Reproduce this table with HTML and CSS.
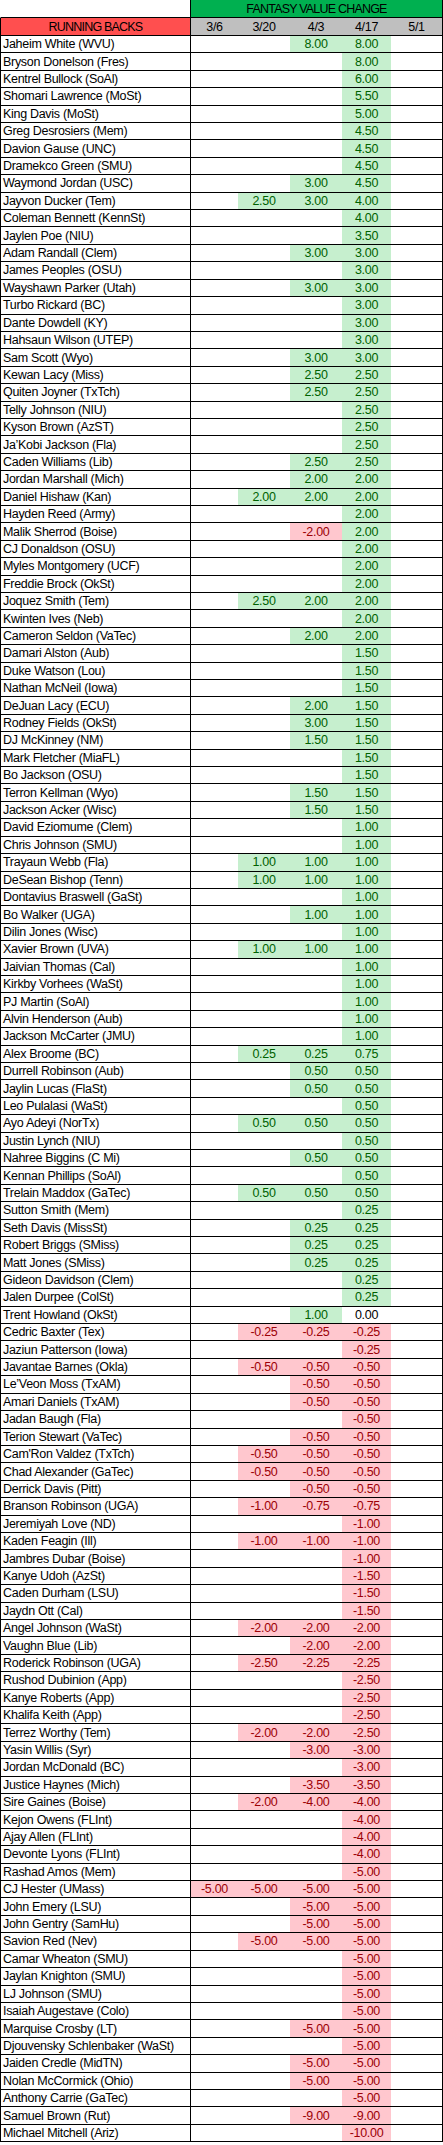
FILE: index.html
```html
<!DOCTYPE html>
<html lang="en">
<head>
<meta charset="utf-8">
<title>Running Backs - Fantasy Value Change</title>
<link rel="stylesheet" href="styles.css">
</head>
<body>
<div class="sheet">
<div class="row top"><span class="blank"></span><span class="title">FANTASY VALUE CHANGE</span></div>
<div class="row head"><span class="nm pos-h">RUNNING BACKS</span><span class="dt">3/6</span><span class="dt">3/20</span><span class="dt">4/3</span><span class="dt">4/17</span><span class="dt">5/1</span></div>
<div class="row"><span class="nm">Jaheim White (WVU)</span><span></span><span></span><span class="g">8.00</span><span class="g">8.00</span><span></span></div>
<div class="row"><span class="nm">Bryson Donelson (Fres)</span><span></span><span></span><span></span><span class="g">8.00</span><span></span></div>
<div class="row"><span class="nm">Kentrel Bullock (SoAl)</span><span></span><span></span><span></span><span class="g">6.00</span><span></span></div>
<div class="row"><span class="nm">Shomari Lawrence (MoSt)</span><span></span><span></span><span></span><span class="g">5.50</span><span></span></div>
<div class="row"><span class="nm">King Davis (MoSt)</span><span></span><span></span><span></span><span class="g">5.00</span><span></span></div>
<div class="row"><span class="nm">Greg Desrosiers (Mem)</span><span></span><span></span><span></span><span class="g">4.50</span><span></span></div>
<div class="row"><span class="nm">Davion Gause (UNC)</span><span></span><span></span><span></span><span class="g">4.50</span><span></span></div>
<div class="row"><span class="nm">Dramekco Green (SMU)</span><span></span><span></span><span></span><span class="g">4.50</span><span></span></div>
<div class="row"><span class="nm">Waymond Jordan (USC)</span><span></span><span></span><span class="g">3.00</span><span class="g">4.50</span><span></span></div>
<div class="row"><span class="nm">Jayvon Ducker (Tem)</span><span></span><span class="g">2.50</span><span class="g">3.00</span><span class="g">4.00</span><span></span></div>
<div class="row"><span class="nm">Coleman Bennett (KennSt)</span><span></span><span></span><span></span><span class="g">4.00</span><span></span></div>
<div class="row"><span class="nm">Jaylen Poe (NIU)</span><span></span><span></span><span></span><span class="g">3.50</span><span></span></div>
<div class="row"><span class="nm">Adam Randall (Clem)</span><span></span><span></span><span class="g">3.00</span><span class="g">3.00</span><span></span></div>
<div class="row"><span class="nm">James Peoples (OSU)</span><span></span><span></span><span></span><span class="g">3.00</span><span></span></div>
<div class="row"><span class="nm">Wayshawn Parker (Utah)</span><span></span><span></span><span class="g">3.00</span><span class="g">3.00</span><span></span></div>
<div class="row"><span class="nm">Turbo Rickard (BC)</span><span></span><span></span><span></span><span class="g">3.00</span><span></span></div>
<div class="row"><span class="nm">Dante Dowdell (KY)</span><span></span><span></span><span></span><span class="g">3.00</span><span></span></div>
<div class="row"><span class="nm">Hahsaun Wilson (UTEP)</span><span></span><span></span><span></span><span class="g">3.00</span><span></span></div>
<div class="row"><span class="nm">Sam Scott (Wyo)</span><span></span><span></span><span class="g">3.00</span><span class="g">3.00</span><span></span></div>
<div class="row"><span class="nm">Kewan Lacy (Miss)</span><span></span><span></span><span class="g">2.50</span><span class="g">2.50</span><span></span></div>
<div class="row"><span class="nm">Quiten Joyner (TxTch)</span><span></span><span></span><span class="g">2.50</span><span class="g">2.50</span><span></span></div>
<div class="row"><span class="nm">Telly Johnson (NIU)</span><span></span><span></span><span></span><span class="g">2.50</span><span></span></div>
<div class="row"><span class="nm">Kyson Brown (AzST)</span><span></span><span></span><span></span><span class="g">2.50</span><span></span></div>
<div class="row"><span class="nm">Ja’Kobi Jackson (Fla)</span><span></span><span></span><span></span><span class="g">2.50</span><span></span></div>
<div class="row"><span class="nm">Caden Williams (Lib)</span><span></span><span></span><span class="g">2.50</span><span class="g">2.50</span><span></span></div>
<div class="row"><span class="nm">Jordan Marshall (Mich)</span><span></span><span></span><span class="g">2.00</span><span class="g">2.00</span><span></span></div>
<div class="row"><span class="nm">Daniel Hishaw (Kan)</span><span></span><span class="g">2.00</span><span class="g">2.00</span><span class="g">2.00</span><span></span></div>
<div class="row"><span class="nm">Hayden Reed (Army)</span><span></span><span></span><span></span><span class="g">2.00</span><span></span></div>
<div class="row"><span class="nm">Malik Sherrod (Boise)</span><span></span><span></span><span class="r">-2.00</span><span class="g">2.00</span><span></span></div>
<div class="row"><span class="nm">CJ Donaldson (OSU)</span><span></span><span></span><span></span><span class="g">2.00</span><span></span></div>
<div class="row"><span class="nm">Myles Montgomery (UCF)</span><span></span><span></span><span></span><span class="g">2.00</span><span></span></div>
<div class="row"><span class="nm">Freddie Brock (OkSt)</span><span></span><span></span><span></span><span class="g">2.00</span><span></span></div>
<div class="row"><span class="nm">Joquez Smith (Tem)</span><span></span><span class="g">2.50</span><span class="g">2.00</span><span class="g">2.00</span><span></span></div>
<div class="row"><span class="nm">Kwinten Ives (Neb)</span><span></span><span></span><span></span><span class="g">2.00</span><span></span></div>
<div class="row"><span class="nm">Cameron Seldon (VaTec)</span><span></span><span></span><span class="g">2.00</span><span class="g">2.00</span><span></span></div>
<div class="row"><span class="nm">Damari Alston (Aub)</span><span></span><span></span><span></span><span class="g">1.50</span><span></span></div>
<div class="row"><span class="nm">Duke Watson (Lou)</span><span></span><span></span><span></span><span class="g">1.50</span><span></span></div>
<div class="row"><span class="nm">Nathan McNeil (Iowa)</span><span></span><span></span><span></span><span class="g">1.50</span><span></span></div>
<div class="row"><span class="nm">DeJuan Lacy (ECU)</span><span></span><span></span><span class="g">2.00</span><span class="g">1.50</span><span></span></div>
<div class="row"><span class="nm">Rodney Fields (OkSt)</span><span></span><span></span><span class="g">3.00</span><span class="g">1.50</span><span></span></div>
<div class="row"><span class="nm">DJ McKinney (NM)</span><span></span><span></span><span class="g">1.50</span><span class="g">1.50</span><span></span></div>
<div class="row"><span class="nm">Mark Fletcher (MiaFL)</span><span></span><span></span><span></span><span class="g">1.50</span><span></span></div>
<div class="row"><span class="nm">Bo Jackson (OSU)</span><span></span><span></span><span></span><span class="g">1.50</span><span></span></div>
<div class="row"><span class="nm">Terron Kellman (Wyo)</span><span></span><span></span><span class="g">1.50</span><span class="g">1.50</span><span></span></div>
<div class="row"><span class="nm">Jackson Acker (Wisc)</span><span></span><span></span><span class="g">1.50</span><span class="g">1.50</span><span></span></div>
<div class="row"><span class="nm">David Eziomume (Clem)</span><span></span><span></span><span></span><span class="g">1.00</span><span></span></div>
<div class="row"><span class="nm">Chris Johnson (SMU)</span><span></span><span></span><span></span><span class="g">1.00</span><span></span></div>
<div class="row"><span class="nm">Trayaun Webb (Fla)</span><span></span><span class="g">1.00</span><span class="g">1.00</span><span class="g">1.00</span><span></span></div>
<div class="row"><span class="nm">DeSean Bishop (Tenn)</span><span></span><span class="g">1.00</span><span class="g">1.00</span><span class="g">1.00</span><span></span></div>
<div class="row"><span class="nm">Dontavius Braswell (GaSt)</span><span></span><span></span><span></span><span class="g">1.00</span><span></span></div>
<div class="row"><span class="nm">Bo Walker (UGA)</span><span></span><span></span><span class="g">1.00</span><span class="g">1.00</span><span></span></div>
<div class="row"><span class="nm">Dilin Jones (Wisc)</span><span></span><span></span><span></span><span class="g">1.00</span><span></span></div>
<div class="row"><span class="nm">Xavier Brown (UVA)</span><span></span><span class="g">1.00</span><span class="g">1.00</span><span class="g">1.00</span><span></span></div>
<div class="row"><span class="nm">Jaivian Thomas (Cal)</span><span></span><span></span><span></span><span class="g">1.00</span><span></span></div>
<div class="row"><span class="nm">Kirkby Vorhees (WaSt)</span><span></span><span></span><span></span><span class="g">1.00</span><span></span></div>
<div class="row"><span class="nm">PJ Martin (SoAl)</span><span></span><span></span><span></span><span class="g">1.00</span><span></span></div>
<div class="row"><span class="nm">Alvin Henderson (Aub)</span><span></span><span></span><span></span><span class="g">1.00</span><span></span></div>
<div class="row"><span class="nm">Jackson McCarter (JMU)</span><span></span><span></span><span></span><span class="g">1.00</span><span></span></div>
<div class="row"><span class="nm">Alex Broome (BC)</span><span></span><span class="g">0.25</span><span class="g">0.25</span><span class="g">0.75</span><span></span></div>
<div class="row"><span class="nm">Durrell Robinson (Aub)</span><span></span><span></span><span class="g">0.50</span><span class="g">0.50</span><span></span></div>
<div class="row"><span class="nm">Jaylin Lucas (FlaSt)</span><span></span><span></span><span class="g">0.50</span><span class="g">0.50</span><span></span></div>
<div class="row"><span class="nm">Leo Pulalasi (WaSt)</span><span></span><span></span><span></span><span class="g">0.50</span><span></span></div>
<div class="row"><span class="nm">Ayo Adeyi (NorTx)</span><span></span><span class="g">0.50</span><span class="g">0.50</span><span class="g">0.50</span><span></span></div>
<div class="row"><span class="nm">Justin Lynch (NIU)</span><span></span><span></span><span></span><span class="g">0.50</span><span></span></div>
<div class="row"><span class="nm">Nahree Biggins (C Mi)</span><span></span><span></span><span class="g">0.50</span><span class="g">0.50</span><span></span></div>
<div class="row"><span class="nm">Kennan Phillips (SoAl)</span><span></span><span></span><span></span><span class="g">0.50</span><span></span></div>
<div class="row"><span class="nm">Trelain Maddox (GaTec)</span><span></span><span class="g">0.50</span><span class="g">0.50</span><span class="g">0.50</span><span></span></div>
<div class="row"><span class="nm">Sutton Smith (Mem)</span><span></span><span></span><span></span><span class="g">0.25</span><span></span></div>
<div class="row"><span class="nm">Seth Davis (MissSt)</span><span></span><span></span><span class="g">0.25</span><span class="g">0.25</span><span></span></div>
<div class="row"><span class="nm">Robert Briggs (SMiss)</span><span></span><span></span><span class="g">0.25</span><span class="g">0.25</span><span></span></div>
<div class="row"><span class="nm">Matt Jones (SMiss)</span><span></span><span></span><span class="g">0.25</span><span class="g">0.25</span><span></span></div>
<div class="row"><span class="nm">Gideon Davidson (Clem)</span><span></span><span></span><span></span><span class="g">0.25</span><span></span></div>
<div class="row"><span class="nm">Jalen Durpee (ColSt)</span><span></span><span></span><span></span><span class="g">0.25</span><span></span></div>
<div class="row"><span class="nm">Trent Howland (OkSt)</span><span></span><span></span><span class="g">1.00</span><span class="z">0.00</span><span></span></div>
<div class="row"><span class="nm">Cedric Baxter (Tex)</span><span></span><span class="r">-0.25</span><span class="r">-0.25</span><span class="r">-0.25</span><span></span></div>
<div class="row"><span class="nm">Jaziun Patterson (Iowa)</span><span></span><span></span><span></span><span class="r">-0.25</span><span></span></div>
<div class="row"><span class="nm">Javantae Barnes (Okla)</span><span></span><span class="r">-0.50</span><span class="r">-0.50</span><span class="r">-0.50</span><span></span></div>
<div class="row"><span class="nm">Le’Veon Moss (TxAM)</span><span></span><span></span><span class="r">-0.50</span><span class="r">-0.50</span><span></span></div>
<div class="row"><span class="nm">Amari Daniels (TxAM)</span><span></span><span></span><span class="r">-0.50</span><span class="r">-0.50</span><span></span></div>
<div class="row"><span class="nm">Jadan Baugh (Fla)</span><span></span><span></span><span></span><span class="r">-0.50</span><span></span></div>
<div class="row"><span class="nm">Terion Stewart (VaTec)</span><span></span><span></span><span class="r">-0.50</span><span class="r">-0.50</span><span></span></div>
<div class="row"><span class="nm">Cam'Ron Valdez (TxTch)</span><span></span><span class="r">-0.50</span><span class="r">-0.50</span><span class="r">-0.50</span><span></span></div>
<div class="row"><span class="nm">Chad Alexander (GaTec)</span><span></span><span class="r">-0.50</span><span class="r">-0.50</span><span class="r">-0.50</span><span></span></div>
<div class="row"><span class="nm">Derrick Davis (Pitt)</span><span></span><span></span><span class="r">-0.50</span><span class="r">-0.50</span><span></span></div>
<div class="row"><span class="nm">Branson Robinson (UGA)</span><span></span><span class="r">-1.00</span><span class="r">-0.75</span><span class="r">-0.75</span><span></span></div>
<div class="row"><span class="nm">Jeremiyah Love (ND)</span><span></span><span></span><span></span><span class="r">-1.00</span><span></span></div>
<div class="row"><span class="nm">Kaden Feagin (Ill)</span><span></span><span class="r">-1.00</span><span class="r">-1.00</span><span class="r">-1.00</span><span></span></div>
<div class="row"><span class="nm">Jambres Dubar (Boise)</span><span></span><span></span><span></span><span class="r">-1.00</span><span></span></div>
<div class="row"><span class="nm">Kanye Udoh (AzSt)</span><span></span><span></span><span></span><span class="r">-1.50</span><span></span></div>
<div class="row"><span class="nm">Caden Durham (LSU)</span><span></span><span></span><span></span><span class="r">-1.50</span><span></span></div>
<div class="row"><span class="nm">Jaydn Ott (Cal)</span><span></span><span></span><span></span><span class="r">-1.50</span><span></span></div>
<div class="row"><span class="nm">Angel Johnson (WaSt)</span><span></span><span class="r">-2.00</span><span class="r">-2.00</span><span class="r">-2.00</span><span></span></div>
<div class="row"><span class="nm">Vaughn Blue (Lib)</span><span></span><span></span><span class="r">-2.00</span><span class="r">-2.00</span><span></span></div>
<div class="row"><span class="nm">Roderick Robinson (UGA)</span><span></span><span class="r">-2.50</span><span class="r">-2.25</span><span class="r">-2.25</span><span></span></div>
<div class="row"><span class="nm">Rushod Dubinion (App)</span><span></span><span></span><span></span><span class="r">-2.50</span><span></span></div>
<div class="row"><span class="nm">Kanye Roberts (App)</span><span></span><span></span><span></span><span class="r">-2.50</span><span></span></div>
<div class="row"><span class="nm">Khalifa Keith (App)</span><span></span><span></span><span></span><span class="r">-2.50</span><span></span></div>
<div class="row"><span class="nm">Terrez Worthy (Tem)</span><span></span><span class="r">-2.00</span><span class="r">-2.00</span><span class="r">-2.50</span><span></span></div>
<div class="row"><span class="nm">Yasin Willis (Syr)</span><span></span><span></span><span class="r">-3.00</span><span class="r">-3.00</span><span></span></div>
<div class="row"><span class="nm">Jordan McDonald (BC)</span><span></span><span></span><span></span><span class="r">-3.00</span><span></span></div>
<div class="row"><span class="nm">Justice Haynes (Mich)</span><span></span><span></span><span class="r">-3.50</span><span class="r">-3.50</span><span></span></div>
<div class="row"><span class="nm">Sire Gaines (Boise)</span><span></span><span class="r">-2.00</span><span class="r">-4.00</span><span class="r">-4.00</span><span></span></div>
<div class="row"><span class="nm">Kejon Owens (FLInt)</span><span></span><span></span><span></span><span class="r">-4.00</span><span></span></div>
<div class="row"><span class="nm">Ajay Allen (FLInt)</span><span></span><span></span><span></span><span class="r">-4.00</span><span></span></div>
<div class="row"><span class="nm">Devonte Lyons (FLInt)</span><span></span><span></span><span></span><span class="r">-4.00</span><span></span></div>
<div class="row"><span class="nm">Rashad Amos (Mem)</span><span></span><span></span><span></span><span class="r">-5.00</span><span></span></div>
<div class="row"><span class="nm">CJ Hester (UMass)</span><span class="r">-5.00</span><span class="r">-5.00</span><span class="r">-5.00</span><span class="r">-5.00</span><span></span></div>
<div class="row"><span class="nm">John Emery (LSU)</span><span></span><span></span><span class="r">-5.00</span><span class="r">-5.00</span><span></span></div>
<div class="row"><span class="nm">John Gentry (SamHu)</span><span></span><span></span><span class="r">-5.00</span><span class="r">-5.00</span><span></span></div>
<div class="row"><span class="nm">Savion Red (Nev)</span><span></span><span class="r">-5.00</span><span class="r">-5.00</span><span class="r">-5.00</span><span></span></div>
<div class="row"><span class="nm">Camar Wheaton (SMU)</span><span></span><span></span><span></span><span class="r">-5.00</span><span></span></div>
<div class="row"><span class="nm">Jaylan Knighton (SMU)</span><span></span><span></span><span></span><span class="r">-5.00</span><span></span></div>
<div class="row"><span class="nm">LJ Johnson (SMU)</span><span></span><span></span><span></span><span class="r">-5.00</span><span></span></div>
<div class="row"><span class="nm">Isaiah Augestave (Colo)</span><span></span><span></span><span></span><span class="r">-5.00</span><span></span></div>
<div class="row"><span class="nm">Marquise Crosby (LT)</span><span></span><span></span><span class="r">-5.00</span><span class="r">-5.00</span><span></span></div>
<div class="row"><span class="nm">Djouvensky Schlenbaker (WaSt)</span><span></span><span></span><span></span><span class="r">-5.00</span><span></span></div>
<div class="row"><span class="nm">Jaiden Credle (MidTN)</span><span></span><span></span><span class="r">-5.00</span><span class="r">-5.00</span><span></span></div>
<div class="row"><span class="nm">Nolan McCormick (Ohio)</span><span></span><span></span><span class="r">-5.00</span><span class="r">-5.00</span><span></span></div>
<div class="row"><span class="nm">Anthony Carrie (GaTec)</span><span></span><span></span><span></span><span class="r">-5.00</span><span></span></div>
<div class="row"><span class="nm">Samuel Brown (Rut)</span><span></span><span></span><span class="r">-9.00</span><span class="r">-9.00</span><span></span></div>
<div class="row"><span class="nm">Michael Mitchell (Ariz)</span><span></span><span></span><span></span><span class="r">-10.00</span><span></span></div>
</div>
</body>
</html>
```
FILE: styles.css
```css
html, body {
  margin: 0;
  padding: 0;
  background: #ffffff;
}

body {
  font-family: "Liberation Sans", Arial, sans-serif;
  font-size: 12.5px;
  letter-spacing: -0.3px;
  color: #000000;
}

.sheet {
  width: 443px;
}

.row {
  display: grid;
  grid-template-columns: 190px 47px 52px 52px 49px 51px;
  height: 17.42px;
  box-sizing: border-box;
  border-left: 1px solid #000;
  border-right: 1px solid #000;
  border-bottom: 1px solid #000;
}

.row > span {
  display: flex;
  align-items: center;
  justify-content: center;
  white-space: nowrap;
  overflow: hidden;
}

.row > .nm {
  justify-content: flex-start;
  padding-left: 2px;
  box-sizing: border-box;
  border-right: 1px solid #000;
}

.row.top {
  height: 18px;
  grid-template-columns: 189px 1fr;
  border-left-color: #ffffff;
}

.row.top .title {
  background: #00b050;
  border-left: 1px solid #000;
  letter-spacing: -0.8px;
}

.row.head {
  height: 18px;
}

.row.head .pos-h {
  background: #ff4f4f;
  justify-content: center;
  padding-left: 0;
  letter-spacing: -0.8px;
}

.row.head .dt {
  background: #bfbfbf;
}

.g {
  background: #c6efce;
  color: #006100;
}

.r {
  background: #ffc7ce;
  color: #9c0006;
}

.z {
  color: #000000;
}
```
